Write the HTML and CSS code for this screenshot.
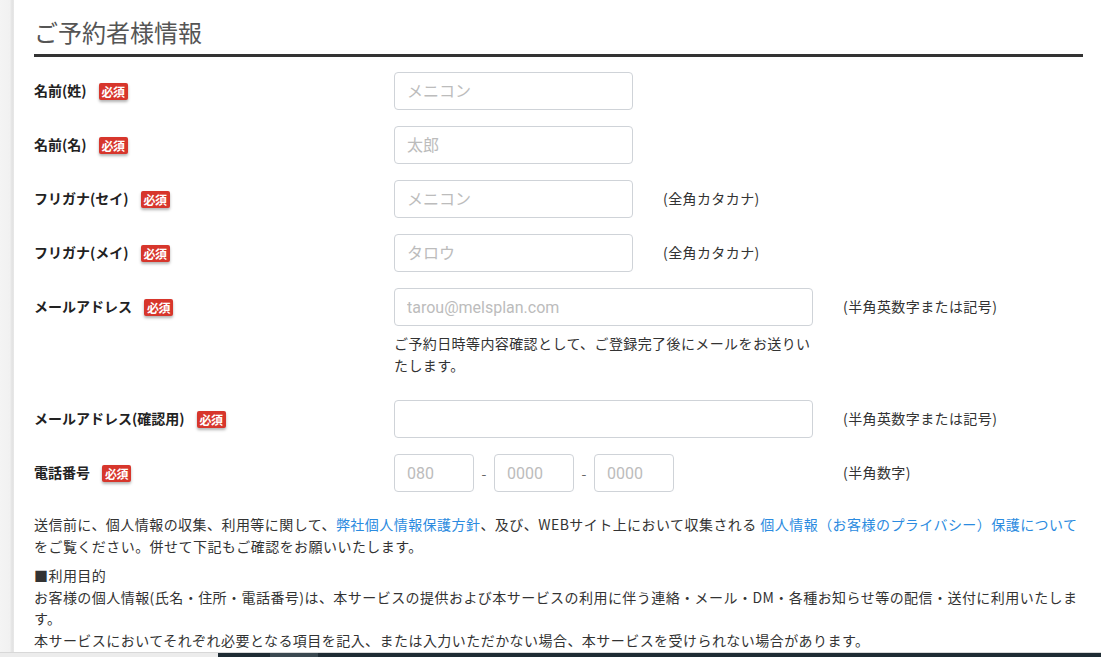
FILE: index.html
```html
<!DOCTYPE html>
<html lang="ja">
<head>
<meta charset="utf-8">
<title>ご予約者様情報</title>
<link rel="stylesheet" href="styles.css">
</head>
<body>
<div class="page">
  <div class="side"></div>
  <main class="main">
    <h2 class="title">ご予約者様情報</h2>
    <div class="form">
      <div class="row">
        <div class="label">名前(姓)<span class="req">必須</span></div>
        <div class="field"><input class="inp" type="text" placeholder="メニコン"></div>
      </div>
      <div class="row">
        <div class="label">名前(名)<span class="req">必須</span></div>
        <div class="field"><input class="inp" type="text" placeholder="太郎"></div>
      </div>
      <div class="row">
        <div class="label">フリガナ(セイ)<span class="req">必須</span></div>
        <div class="field"><input class="inp" type="text" placeholder="メニコン"></div>
        <div class="hint">(全角カタカナ)</div>
      </div>
      <div class="row">
        <div class="label">フリガナ(メイ)<span class="req">必須</span></div>
        <div class="field"><input class="inp" type="text" placeholder="タロウ"></div>
        <div class="hint">(全角カタカナ)</div>
      </div>
      <div class="row">
        <div class="label">メールアドレス<span class="req">必須</span></div>
        <div class="field wide">
          <input class="inp wide-inp" type="text" placeholder="tarou@melsplan.com">
          <p class="note">ご予約日時等内容確認として、ご登録完了後にメールをお送りいたします。</p>
        </div>
        <div class="hint">(半角英数字または記号)</div>
      </div>
      <div class="row">
        <div class="label">メールアドレス(確認用)<span class="req">必須</span></div>
        <div class="field wide"><input class="inp wide-inp" type="text"></div>
        <div class="hint">(半角英数字または記号)</div>
      </div>
      <div class="row">
        <div class="label">電話番号<span class="req">必須</span></div>
        <div class="field wide tel">
          <input class="inp tel-inp" type="text" placeholder="080">
          <span class="dash">-</span>
          <input class="inp tel-inp" type="text" placeholder="0000">
          <span class="dash">-</span>
          <input class="inp tel-inp" type="text" placeholder="0000">
        </div>
        <div class="hint">(半角数字)</div>
      </div>
    </div>
    <div class="policy">
      <p class="p1">送信前に、個人情報の収集、利用等に関して、<a href="#">弊社個人情報保護方針</a>、及び、WEBサイト上において収集される <a href="#">個人情報（お客様のプライバシー）保護について</a>をご覧ください。併せて下記もご確認をお願いいたします。</p>
      <p class="p2">■利用目的<br>お客様の個人情報(氏名・住所・電話番号)は、本サービスの提供および本サービスの利用に伴う連絡・メール・DM・各種お知らせ等の配信・送付に利用いたします。<br>本サービスにおいてそれぞれ必要となる項目を記入、または入力いただかない場合、本サービスを受けられない場合があります。</p>
    </div>
  </main>
</div>
<div class="taskbar">
  <div class="tb-light"></div>
  <div class="tb-dark"></div>
  <div class="tb-mid"></div>
  <div class="tb-dark2"></div>
</div>
</body>
</html>
```

FILE: styles.css
```css
* { box-sizing: border-box; }
html, body {
  margin: 0;
  padding: 0;
  height: 657px;
  overflow: hidden;
  background: #fff;
}
body {
  font-family: "Noto Sans CJK JP", "Noto Sans", sans-serif;
  color: #333;
  font-size: 14px;
}
.page {
  display: flex;
  height: 657px;
}
.side {
  width: 14px;
  flex: none;
  background: linear-gradient(to right, #f4f4f4 0, #f1f1f1 10px, #e2e2e2 12px, #e8e8e8 14px);
}
.main {
  flex: 1;
  padding: 0 18px 0 20px;
}
.title {
  margin: 0;
  padding-top: 12px;
  font-size: 24px;
  line-height: 40px;
  font-weight: 400;
  color: #555;
  border-bottom: 3px solid #333;
  padding-bottom: 2px;
}
.form {
  display: flex;
  flex-direction: column;
  gap: 16px;
  margin-top: 15px;
}
.row {
  display: flex;
  align-items: flex-start;
}
.label {
  width: 360px;
  flex: none;
  height: 36px;
  display: flex;
  align-items: center;
  font-weight: 700;
  font-size: 14px;
  color: #222;
}
.req {
  display: inline-block;
  margin-left: 12px;
  background: #d7362c;
  color: #fff;
  font-size: 12px;
  font-weight: 700;
  line-height: 17px;
  height: 17px;
  padding: 0 3px;
  border-radius: 2px;
  box-shadow: 0 2px 3px rgba(0,0,0,0.3);
  margin-top: 3px;
  letter-spacing: -0.5px;
}
.field {
  width: 239px;
  flex: none;
}
.field.wide {
  width: 419px;
}
.inp {
  display: block;
  width: 100%;
  height: 38px;
  border: 1px solid #cfd3d8;
  border-radius: 4px;
  padding: 0 12px;
  font-size: 16px;
  font-family: Roboto, "Noto Sans CJK JP", sans-serif;
  color: #333;
  background: #fff;
  outline: none;
}
.inp::placeholder {
  color: #bcbcbc;
  font-family: Roboto, "Noto Sans CJK JP", sans-serif;
}
.note {
  margin: 6px 0 8px 0;
  line-height: 22px;
  font-size: 14px;
  color: #333;
  letter-spacing: 0.4px;
}
.hint {
  margin-left: 30px;
  height: 36px;
  display: flex;
  align-items: center;
  font-size: 14px;
  color: #333;
  letter-spacing: 0.4px;
}
.tel {
  display: flex;
  align-items: center;
}
.tel-inp {
  width: 80px;
}
.dash {
  width: 20px;
  text-align: center;
  color: #666;
  font-size: 14px;
}
.policy {
  margin-top: 21px;
  font-size: 14px;
  color: #333;
  letter-spacing: 0.45px;
}
.policy p {
  margin: 0;
}
.p1 {
  line-height: 22px;
}
.p2 {
  margin-top: 8px !important;
  line-height: 21.5px;
}
.policy a {
  color: #2b8be0;
  text-decoration: none;
}
.taskbar {
  position: fixed;
  left: 0;
  right: 0;
  bottom: 0;
  height: 5px;
  display: flex;
  border-top: 1px solid #d8d8d8;
}
.tb-light { width: 218px; background: #ececec; }
.tb-dark { width: 52px; background: #1f2c34; }
.tb-mid { width: 48px; background: #3a4850; }
.tb-dark2 { flex: 1; background: #1f2c34; }
```
